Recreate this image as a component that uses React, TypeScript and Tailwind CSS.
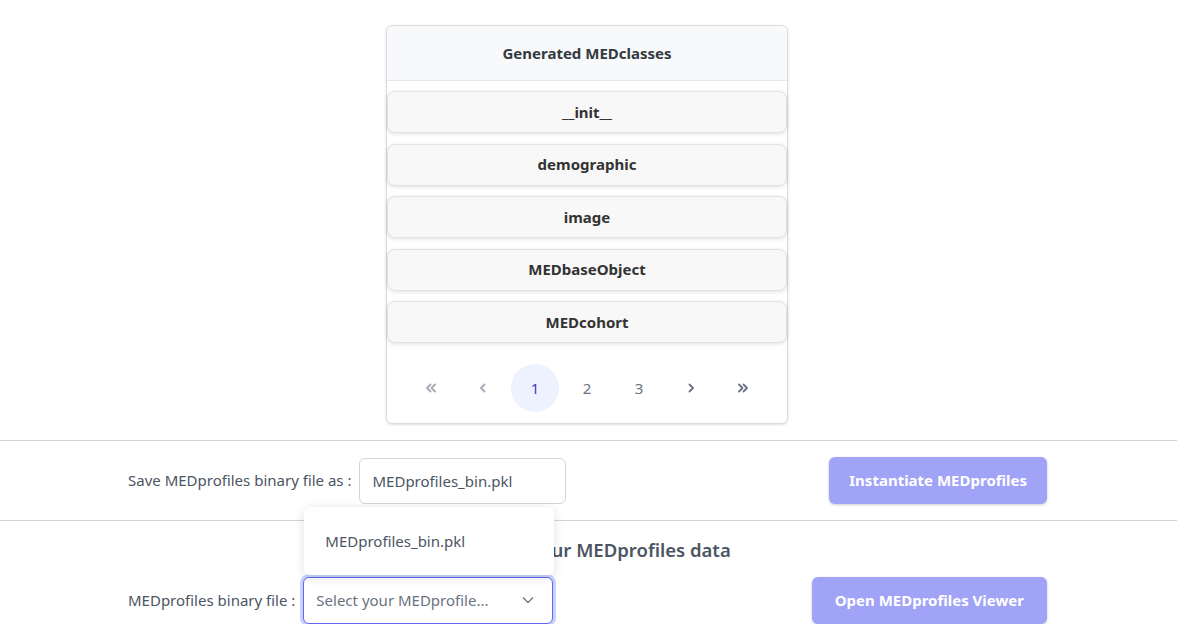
import React, { useState } from 'react';

const classes = ['__init__', 'demographic', 'image', 'MEDbaseObject', 'MEDcohort'];

// paginator chevrons, drawn as strokes
const Chevrons = ({ d }: { d: string }) => (
  <svg width="14" height="14" viewBox="0 0 14 14" fill="none" stroke="currentColor" strokeWidth="1.8" strokeLinecap="round" strokeLinejoin="round">
    <path d={d} />
  </svg>
);

const App = () => {
  const [page, setPage] = useState(1);
  const [fileName, setFileName] = useState('MEDprofiles_bin.pkl');

  return (
    <div className="w-[1177px] bg-white text-[#4b5563] font-['Noto_Sans',sans-serif]">
      <div className="flex justify-center pt-[25px] pr-[3px]">
        <div className="w-[402px] border border-[#dcdcdc] rounded-md bg-white shadow-sm">
          <div className="h-[55px] flex items-center justify-center bg-[#f8f9fa] border-b border-[#e5e7eb] rounded-t-md text-[15px] font-bold text-[#343a40]">
            Generated MEDclasses
          </div>
          <div className="flex flex-col gap-[10.5px] pt-[10px]">
            {classes.map((c) => (
              <button
                key={c}
                className="h-[42px] flex items-center justify-center bg-[#f8f8f8] border border-[#e2e2e2] rounded-lg shadow-[0_1px_4px_rgba(0,0,0,0.12)] text-[15px] font-bold text-[#333]"
              >
                {c}
              </button>
            ))}
          </div>
          <div className="flex items-center justify-center pt-[21px] pb-[11px] gap-[4px]">
            <span className="w-[48px] h-[48px] flex items-center justify-center text-[#6b7280] opacity-60">
              <Chevrons d="M6.5 3.5L3 7l3.5 3.5M11 3.5L7.5 7l3.5 3.5" />
            </span>
            <span className="w-[48px] h-[48px] flex items-center justify-center text-[#6b7280] opacity-60">
              <Chevrons d="M8.5 3.5L5 7l3.5 3.5" />
            </span>
            {[1, 2, 3].map((p) => (
              <button
                key={p}
                onClick={() => setPage(p)}
                className={
                  p === page
                    ? 'w-[48px] h-[48px] rounded-full flex items-center justify-center bg-[#eef2ff] text-[#4338ca] text-[15px]'
                    : 'w-[48px] h-[48px] rounded-full flex items-center justify-center text-[#6b7280] text-[15px]'
                }
              >
                {p}
              </button>
            ))}
            <span className="w-[48px] h-[48px] flex items-center justify-center text-[#6b7280]">
              <Chevrons d="M5.5 3.5L9 7l-3.5 3.5" />
            </span>
            <span className="w-[48px] h-[48px] flex items-center justify-center text-[#6b7280]">
              <Chevrons d="M3 3.5L6.5 7 3 10.5M7.5 3.5L11 7l-3.5 3.5" />
            </span>
          </div>
        </div>
      </div>

      <hr className="mt-[16px] border-t border-[#d4d4d4]" />

      <div className="h-[79px] flex items-center justify-between pl-[128px] pr-[130px]">
        <div className="flex items-center gap-[8px]">
          <label className="text-[15px] text-[#4b5563]">Save MEDprofiles binary file as :</label>
          <input
            value={fileName}
            onChange={(e) => setFileName(e.target.value)}
            className="w-[207px] h-[46px] px-[12px] border border-[#d1d5db] rounded-md text-[15px] text-[#4b5563] outline-none"
          />
        </div>
        <button disabled className="h-[47px] px-[20px] rounded-md bg-[#a1a3f7] text-white text-[15px] font-bold shadow-[0_1px_3px_rgba(0,0,0,0.2)]">
          Instantiate MEDprofiles
        </button>
      </div>

      <hr className="border-t border-[#d4d4d4]" />

      <div className="relative">
        <h2 className="pt-[15px] text-center text-[18.5px] font-semibold text-[#4b5563]">Visualize your MEDprofiles data</h2>
        <div className="flex items-center justify-between pl-[128px] pr-[130px] pt-[13px]">
          <div className="flex items-center gap-[8px]">
            <label className="text-[15px] text-[#4b5563]">MEDprofiles binary file :</label>
            <div className="relative w-[250px] h-[47px] flex items-center border border-[#6366f1] rounded-md shadow-[0_0_0_3px_#c7d2fe] bg-white">
              <span className="flex-1 pl-[12px] text-[15px] text-[#6b7280] truncate">Select your MEDprofile...</span>
              <span className="w-[48px] flex items-center justify-center text-[#6b7280]">
                <svg width="14" height="14" viewBox="0 0 14 14" fill="none" stroke="currentColor" strokeWidth="1.3">
                  <path d="M2 4.5l5 5 5-5" />
                </svg>
              </span>
              <div className="absolute left-0 bottom-[48px] w-[250px] h-[68px] bg-white rounded-md shadow-[0_2px_12px_rgba(0,0,0,0.12)] flex items-center pl-[21px] text-[15px] text-[#4b5563]">
                MEDprofiles_bin.pkl
              </div>
            </div>
          </div>
          <button disabled className="h-[47px] px-[23px] rounded-md bg-[#a1a3f7] text-white text-[15px] font-bold shadow-[0_1px_3px_rgba(0,0,0,0.2)]">
            Open MEDprofiles Viewer
          </button>
        </div>
      </div>
    </div>
  );
};

export default App;
